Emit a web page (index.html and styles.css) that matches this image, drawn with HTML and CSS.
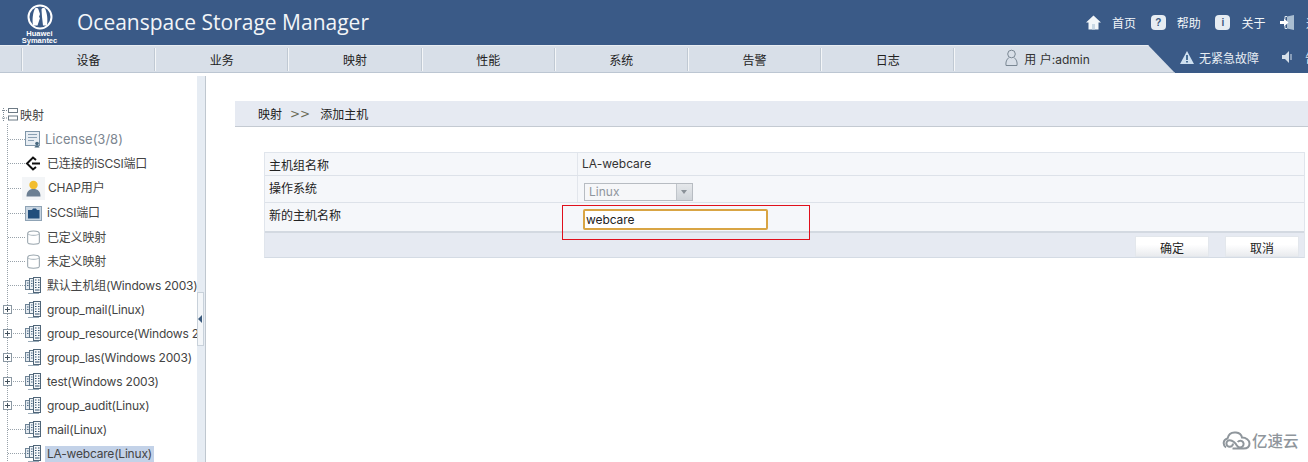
FILE: index.html
```html
<!DOCTYPE html>
<html lang="zh">
<head>
<meta charset="utf-8">
<title>Oceanspace Storage Manager</title>
<link rel="stylesheet" href="styles.css">
</head>
<body>
<svg class="defs" width="0" height="0">
  <symbol id="host" viewBox="0 0 17 17">
    <rect x="0.500" y="3.500" width="7" height="9" fill="#e4eaf0" stroke="#6f8496"/>
    <rect x="4.500" y="1.500" width="8" height="11" fill="#eef2f6" stroke="#5f7587"/>
    <rect x="8.500" y="0.500" width="7" height="15" fill="#f5f7f9" stroke="#4f6578"/>
    <path d="M2 6h1.500M2 8.500h1.500M6 4h1.500M6 6.500h1.500M6 9h1.500" stroke="#4c6a86"/>
    <path d="M10 3h1.500M13 3h1.500M10 5.500h1.500M13 5.500h1.500M10 8h1.500M13 8h1.500M10 10.500h1.500M13 10.500h1.500M10 13h4.500" stroke="#34526f"/>
    <path d="M3 16.500h11" stroke="#9aabb9"/>
  </symbol>
  <symbol id="can" viewBox="0 0 16 16">
    <path d="M2.500 4.500c0-3.500 11-3.500 11 0v8c0 2.500-11 2.500-11 0z" fill="#fff" stroke="#9aa6ae"/>
    <path d="M2.500 4.500c1.500 2 9.500 2 11 0" fill="none" stroke="#b4bec5"/>
  </symbol>
</svg>

<header class="topbar">
  <div class="logo">
    <svg class="logo-mark" width="26" height="26" viewBox="0 0 26 26"><circle cx="13" cy="13" r="11.500" fill="none" stroke="#fff" stroke-width="2"/><path d="M8 4.500c1.500-.8 3-.4 3.500 1L13 10l-1 3 1 1-2.500 7.500h-4.500C5 15 6 8 8 4.500zM18 4.500c-1.500-.8-3-.4-3.500 1L15 13l1 8.500h4c1-6.500 0-13-2-17z" fill="#fff"/></svg>
    <div class="logo-text">Huawei<br>Symantec</div>
  </div>
  <h1 class="product">Oceanspace Storage Manager</h1>
  <nav class="toplinks">
    <svg class="tl-icon" width="15" height="15" viewBox="0 0 15 15"><path d="M7.500 0.500L0 7.500h2.500V14.500h10V7.500H15z" fill="#f2f6f9"/><path d="M6 9h3v5.500H6z" fill="#c9d8e4"/></svg>
    <span class="tl-text">首页</span>
    <span class="badge">?</span>
    <span class="tl-text">帮助</span>
    <span class="badge badge-info">i</span>
    <span class="tl-text">关于</span>
    <svg class="tl-icon" width="15" height="15" viewBox="0 0 15 15"><path d="M7 1.500L14 0v15l-7-1.500z" fill="#a9bdd1"/><path d="M7 1.500h-2v3M5 10.500v3h2" fill="none" stroke="#dce6ee"/><path d="M0 6h4V3.500L8.500 7.500 4 11.500V9H0z" fill="#fff"/></svg>
    <span class="tl-text">退出</span>
  </nav>
</header>

<div class="navrow">
  <div class="menu">
    <div class="menu-lead"></div>
    <a class="menu-item">设备</a>
    <a class="menu-item">业务</a>
    <a class="menu-item">映射</a>
    <a class="menu-item">性能</a>
    <a class="menu-item">系统</a>
    <a class="menu-item">告警</a>
    <a class="menu-item">日志</a>
    <div class="menu-user">
      <svg class="user-icon" width="13" height="18" viewBox="0 0 13 18"><circle cx="6.500" cy="5" r="3.800" fill="none" stroke="#7a8793"/><path d="M4 8.500C1.500 10.500.5 13 1 16.500h11c.5-3.500-.5-6-3-8" fill="none" stroke="#7a8793"/></svg>
      <span>用 户:admin</span>
    </div>
  </div>
  <div class="status">
    <svg class="status-icon" width="14" height="13" viewBox="0 0 14 13"><path d="M7 0l7 13H0z" fill="#cfe0f0"/><path d="M6.200 4h1.600v5H6.200zM6.200 10h1.600v1.500H6.200z" fill="#23507f"/></svg>
    <span class="status-text">无紧急故障</span>
    <svg class="speaker" width="12" height="14" viewBox="0 0 12 14"><path d="M1 5h3l4-4v12l-4-4H1z" fill="#d6e0ea"/><path d="M10 4v6" stroke="#d6e0ea"/></svg>
    <span class="status-text">告警</span>
  </div>
</div>

<main class="workspace">
  <aside class="sidebar">
    <div class="tree-root">
      <svg class="root-icon" width="17" height="15" viewBox="0 0 17 15"><path d="M2.500 1v13M1 3.500h5M1 11h5" stroke="#7f8c97" stroke-dasharray="1 1" fill="none"/><rect x="7.500" y="1.500" width="9" height="4" fill="none" stroke="#6d7a85"/><rect x="7.500" y="9" width="9" height="4" fill="none" stroke="#6d7a85"/></svg>
      <span>映射</span>
    </div>
    <ul class="tree">
      <li class="node node-tall">
        <span class="dash"></span>
        <svg class="ico" width="17" height="17" viewBox="0 0 17 17"><rect x="0.500" y="0.500" width="14" height="14" fill="#e7edf3" stroke="#7e95a8"/><path d="M3 3.500h9M3 6.500h9M3 9.500h6" stroke="#8aa0b3"/><circle cx="12" cy="12.500" r="1.800" fill="#47687f"/><path d="M9.500 16.500c0-2.500 5-2.500 5 0z" fill="#47687f"/></svg>
        <span class="label label-muted">License(3/8)</span>
      </li>
      <li class="node node-tall">
        <span class="dash"></span>
        <svg class="ico" width="17" height="17" viewBox="0 0 17 17"><path d="M11 5L8 2.500 2 8.500l6 6 3-2.500" fill="none" stroke="#111" stroke-width="2"/><path d="M7 8.500h8" stroke="#111" stroke-width="2"/></svg>
        <span class="label">已连接的iSCSI端口</span>
      </li>
      <li class="node node-tall">
        <span class="dash"></span>
        <svg class="ico ico-tile" width="17" height="17" viewBox="0 0 17 17"><circle cx="8.500" cy="5" r="4.200" fill="#f2bd2d"/><path d="M1.500 16.500c0-5 2.500-7.500 7-7.500s7 2.500 7 7.500z" fill="#6c7f93"/></svg>
        <span class="label label-wide">CHAP用户</span>
      </li>
      <li class="node node-tall">
        <span class="dash"></span>
        <svg class="ico" width="17" height="17" viewBox="0 0 17 17"><rect x=".5" y="1.500" width="16" height="14" fill="#c8d5e1" stroke="#8fa3b5"/><path d="M3 5h4l1-1.500h3L12 5h2.500v8.500H3z" fill="#234f7c"/></svg>
        <span class="label">iSCSI端口</span>
      </li>
      <li class="node node-tall">
        <span class="dash"></span>
        <svg class="ico" width="17" height="17"><use href="#can"/></svg>
        <span class="label">已定义映射</span>
      </li>
      <li class="node">
        <span class="dash"></span>
        <svg class="ico" width="17" height="17"><use href="#can"/></svg>
        <span class="label">未定义映射</span>
      </li>
      <li class="node">
        <span class="dash"></span>
        <svg class="ico" width="17" height="17"><use href="#host"/></svg>
        <span class="label">默认主机组(Windows 2003)</span>
      </li>
      <li class="node">
        <span class="plus"></span><span class="dash dash-short"></span>
        <svg class="ico" width="17" height="17"><use href="#host"/></svg>
        <span class="label">group_mail(Linux)</span>
      </li>
      <li class="node">
        <span class="plus"></span><span class="dash dash-short"></span>
        <svg class="ico" width="17" height="17"><use href="#host"/></svg>
        <span class="label">group_resource(Windows 2003)</span>
      </li>
      <li class="node">
        <span class="plus"></span><span class="dash dash-short"></span>
        <svg class="ico" width="17" height="17"><use href="#host"/></svg>
        <span class="label">group_las(Windows 2003)</span>
      </li>
      <li class="node">
        <span class="plus"></span><span class="dash dash-short"></span>
        <svg class="ico" width="17" height="17"><use href="#host"/></svg>
        <span class="label">test(Windows 2003)</span>
      </li>
      <li class="node">
        <span class="plus"></span><span class="dash dash-short"></span>
        <svg class="ico" width="17" height="17"><use href="#host"/></svg>
        <span class="label">group_audit(Linux)</span>
      </li>
      <li class="node">
        <span class="dash"></span>
        <svg class="ico" width="17" height="17"><use href="#host"/></svg>
        <span class="label">mail(Linux)</span>
      </li>
      <li class="node">
        <span class="dash"></span>
        <svg class="ico" width="17" height="17"><use href="#host"/></svg>
        <span class="label label-selected">LA-webcare(Linux)</span>
      </li>
    </ul>
  </aside>
  <div class="splitter">
    <div class="grip"></div>
  </div>
  <section class="content">
    <div class="crumb"><span>映射</span><span class="crumb-sep">&gt;&gt;</span><span>添加主机</span></div>
    <div class="panel">
      <div class="row row-1">
        <div class="cell-label">主机组名称</div>
        <div class="cell-value">LA-webcare</div>
      </div>
      <div class="row row-2">
        <div class="cell-label">操作系统</div>
        <div class="cell-value">
          <div class="select"><span class="select-text">Linux</span><span class="select-btn"></span></div>
        </div>
      </div>
      <div class="row row-3">
        <div class="cell-label">新的主机名称</div>
        <div class="cell-value">
          <input class="field" type="text" value="webcare">
        </div>
      </div>
      <div class="actions">
        <button class="btn" type="button">确定</button>
        <button class="btn" type="button">取消</button>
      </div>
      <div class="highlight"></div>
    </div>
  </section>
</main>
<div class="watermark">
  <svg class="wm-icon" width="29" height="19" viewBox="0 0 29 19"><path d="M4 16.500C0.500 14 1 8.500 5.500 7.500 6.500 3 10 1 14 1.500c3.500.4 5.500 2.500 6 5 4 0 7.500 2.500 7.500 6s-2.500 5-6 5h-11" fill="none" stroke="#8f969c" stroke-width="2"/><path d="M11 12.500a3.300 3.300 0 1 1-3.300-3.300c3 0 6 3 7 5 1 1.800 3 2.500 4.500 2a3.300 3.300 0 1 0-3.500-5.200" fill="none" stroke="#8f969c" stroke-width="2"/></svg>
  <span>亿速云</span>
</div>
</body>
</html>
```

FILE: styles.css
```css
* { box-sizing: border-box; }
html, body {
  margin: 0;
  height: 462px;
  overflow: hidden;
  background: #fff;
  font-family: Inter, "Noto Sans CJK SC", sans-serif;
  font-size: 12px;
  color: #333;
}
.defs { position: absolute; }

.topbar {
  height: 45px;
  background: #3a5a87;
  display: flex;
  align-items: center;
  color: #fff;
}
.logo {
  width: 33px;
  flex: none;
  margin-left: 23px;
  margin-right: 21px;
  display: flex;
  flex-direction: column;
  align-items: center;
}
.logo-mark { display: block; margin-top: 2px; }
.logo-text {
  font: bold 7.500px/7px "Liberation Sans", sans-serif;
  text-align: center;
  white-space: nowrap;
  margin-top: 0;
}
.product {
  margin: 0;
  font: 400 21px/1 "Open Sans", sans-serif;
  color: #f2f5f8;
  white-space: nowrap;
}
.toplinks {
  margin-left: auto;
  margin-right: -36.800px;
  display: flex;
  flex: none;
  align-items: center;
  height: 45px;
  font-size: 12px;
  font-family: "Noto Sans CJK SC", sans-serif;
}
.tl-icon { display: block; flex: none; margin-right: 11px; }
.tl-text { margin-right: 14.700px; white-space: nowrap; color: #f2f5f8; }
.badge {
  width: 15px;
  height: 15px;
  flex: none;
  border-radius: 4px;
  background: #e6ecf2;
  color: #39587f;
  font: bold 10px/15px "Liberation Sans", sans-serif;
  text-align: center;
  margin-right: 11px;
}

.navrow {
  height: 28px;
  display: flex;
  background: #3a5a87;
}
.menu {
  width: 1175px;
  flex: none;
  display: flex;
  background: #d8dfe8;
  border-bottom: 1px solid #bcc6d2;
  border-top: 1px solid #e9edf2;
  clip-path: polygon(0 0, 1148px 0, 1175px 100%, 0 100%);
  padding-top: 2px;
}
.menu-lead { width: 22px; height: 23px; flex: none; }
.menu-item {
  width: 133.200px;
  flex: none;
  height: 23px;
  border-left: 1px solid #f4f6f8;
  box-shadow: -1px 0 0 #c0c9d3;
  padding-right: 1px;
  text-align: center;
  font: 12px/24px "Noto Sans CJK SC", sans-serif;
  color: #222;
}
.menu-user {
  width: 193.600px;
  flex: none;
  height: 23px;
  border-left: 1px solid #f4f6f8;
  box-shadow: -1px 0 0 #c0c9d3;
  display: flex;
  align-items: center;
  gap: 6px;
  padding: 0 0 3px 50px;
  color: #333;
}
.user-icon { flex: none; }
.status {
  flex: 1;
  display: flex;
  align-items: center;
  color: #e8eef4;
  padding: 0 0 4px 5px;
  white-space: nowrap;
  overflow: hidden;
  font-family: "Noto Sans CJK SC", sans-serif;
}
.status-icon { flex: none; }
.status-text { margin-left: 5px; flex: none; }
.speaker { flex: none; margin-left: 22px; margin-right: 7px; }

.workspace {
  height: 389px;
  display: flex;
  padding-top: 3px;
}
.sidebar {
  width: 197px;
  flex: none;
  overflow: hidden;
  padding-top: 30px;
  white-space: nowrap;
}
.tree-root {
  display: flex;
  align-items: center;
  gap: 2px;
  height: 20px;
  padding-left: 1px;
  margin-top: -2px;
  color: #444;
  font-family: "Noto Sans CJK SC", sans-serif;
}
.root-icon { flex: none; }
.tree {
  list-style: none;
  margin: 0;
  padding: 3px 0 0 7px;
  background-image: linear-gradient(#98a2aa 50%, transparent 50%);
  background-size: 1px 2px;
  background-repeat: repeat-y;
  background-position: 7px 0;
}
.node {
  height: 24px;
  display: flex;
  align-items: center;
}
.node-tall { height: 24.600px; }
.dash {
  width: 17px;
  flex: none;
  margin-left: 1px;
  height: 1px;
  background-image: linear-gradient(90deg, #98a2aa 50%, transparent 50%);
  background-size: 2px 1px;
}
.dash-short { width: 12px; margin-left: 0; }
.plus {
  width: 9px;
  height: 9px;
  margin-left: -4px;
  margin-right: 1px;
  flex: none;
  border: 1px solid #8b98a3;
  background:
    linear-gradient(#44525e, #44525e) center / 5px 1px no-repeat,
    linear-gradient(#44525e, #44525e) center / 1px 5px no-repeat,
    #fff;
}
.ico { flex: none; }
.ico-tile { background: #f3f5f7; outline: 3px solid #f3f5f7; }
.label {
  margin-left: 3px;
  padding: 0 2px;
  line-height: 16px;
  color: #444;
  letter-spacing: -0.2px;
}
.label-muted { color: #7c8690; font-size: 13px; margin-left: 1px; letter-spacing: 0; }
.label-wide { margin-left: 4px; }
.label-selected { background: #c3d2e8; }

.splitter {
  width: 9px;
  flex: none;
  background: #e6ecf3;
  border-right: 1px solid #bfc7cf;
  position: relative;
}
.grip {
  position: absolute;
  left: 0;
  top: 216px;
  width: 7px;
  height: 54px;
  background: #f3f6f9;
  border: 1px solid #c8d1da;
}
.grip::after {
  content: "";
  position: absolute;
  left: 0;
  top: 22px;
  border: 4px solid transparent;
  border-left-width: 0;
  border-right: 4px solid #3b5a7d;
}

.content {
  flex: 1;
  padding: 25px 0 0 29px;
}
.crumb {
  height: 26px;
  background: #e6eaf2;
  border-bottom: 1px solid #c4cad2;
  padding-left: 23px;
  display: flex;
  align-items: center;
  gap: 8px;
  color: #222;
  font-family: "Noto Sans CJK SC", sans-serif;
}
.crumb-sep { color: #6c6c58; margin-right: 2px; font-family: "DejaVu Sans", sans-serif; }
.panel {
  position: relative;
  width: 1041px;
  margin: 25px 0 0 29px;
  border: 1px solid #e0e5ec;
  border-bottom: 1px solid #d4dbe4;
}
.row {
  display: flex;
  background: #f5f7fa;
  border-bottom: 1px solid #dde2e9;
}
.row-1 { height: 23px; }
.row-2 { height: 27px; }
.row-3 { height: 30px; border-bottom: 2px solid #d3d9e1; }
.cell-label {
  width: 312px;
  padding: 3px 0 0 4px;
  line-height: 18px;
  color: #222;
  font-family: "Noto Sans CJK SC", sans-serif;
}
.cell-value {
  flex: 1;
  padding: 2px 0 0 4px;
  line-height: 18px;
  border-left: 1px solid #e2e6ec;
}
.row-3 .cell-value { border-left: 0; padding: 6px 0 0 6px; }
.row-2 .cell-value { padding: 7px 0 0 6px; }
.select {
  width: 109px;
  height: 18px;
  background: #f6f7f9;
  border: 1px solid #b7bcc2;
  display: flex;
  align-items: center;
  justify-content: space-between;
  padding: 0 0 0 4px;
  color: #8f969d;
}
.select-text { line-height: 16px; }
.select-btn {
  width: 16px;
  height: 16px;
  background: linear-gradient(#e5e8eb, #cfd4d9);
  border-left: 1px solid #c0c5cb;
  position: relative;
}
.select-btn::after {
  content: "";
  position: absolute;
  left: 4px;
  top: 6px;
  border: 3.500px solid transparent;
  border-top: 4px solid #8a9198;
  border-bottom: 0;
}
.field {
  display: block;
  width: 185px;
  height: 21px;
  border: 2px solid #d9a544;
  border-radius: 2px;
  background: #fff;
  padding: 0 1px;
  font: 12px Inter, sans-serif;
  letter-spacing: -0.1px;
  color: #222;
}
.actions {
  height: 24px;
  background: #e6eaf2;
  display: flex;
  justify-content: flex-end;
  gap: 16px;
  padding: 3px 5px 0 0;
}
.btn {
  width: 74px;
  height: 21px;
  border: 1px solid #e3e7ec;
  background: linear-gradient(#fff 40%, #e9ebee);
  font: 12px "Noto Sans CJK SC", sans-serif;
  color: #222;
  padding: 2px 0 0;
}
.highlight {
  position: absolute;
  left: 297px;
  top: 52px;
  width: 248px;
  height: 35px;
  border: 1px solid #e0101c;
}
.watermark {
  position: absolute;
  left: 1222px;
  top: 431px;
  display: flex;
  align-items: center;
  gap: 1px;
  color: #8f969c;
  font: 500 15.500px/19px "Noto Sans CJK SC", sans-serif;
}
.wm-icon { flex: none; }
```
